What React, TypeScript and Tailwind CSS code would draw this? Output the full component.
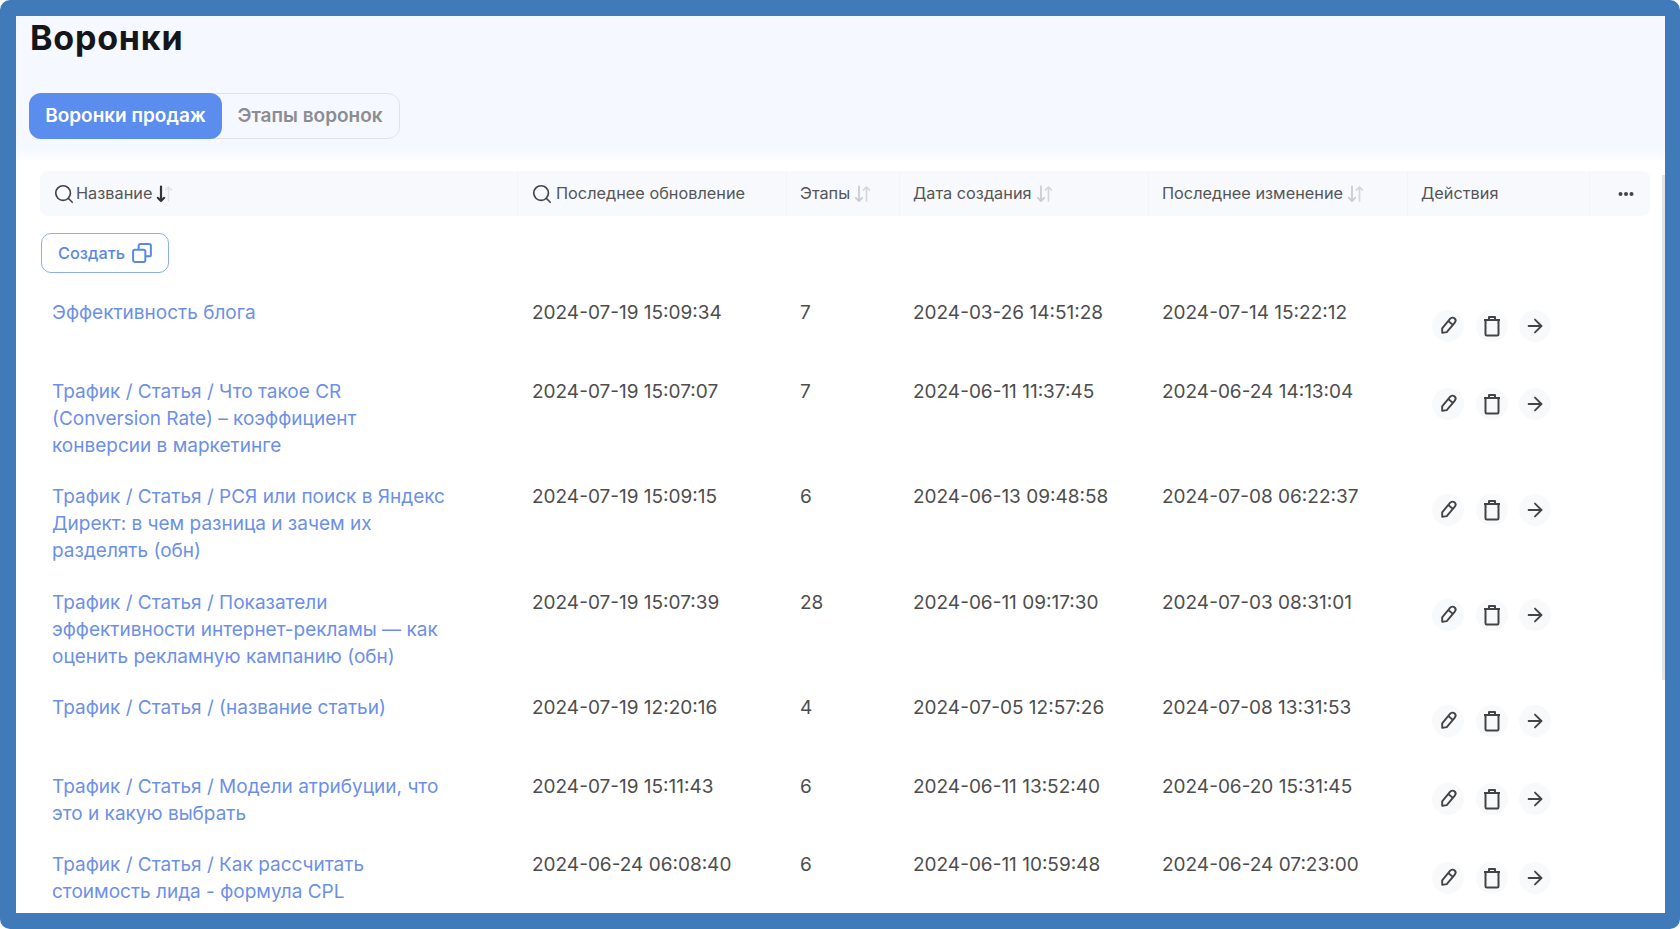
import React from "react";
import { Search, ArrowRight } from "lucide-react";

type Row = { name: string[]; updated: string; stages: string; created: string; changed: string };

const rows: Row[] = [
  { name: ["Эффективность блога"], updated: "2024-07-19 15:09:34", stages: "7", created: "2024-03-26 14:51:28", changed: "2024-07-14 15:22:12" },
  { name: ["Трафик / Статья / Что такое CR", "(Conversion Rate) – коэффициент", "конверсии в маркетинге"], updated: "2024-07-19 15:07:07", stages: "7", created: "2024-06-11 11:37:45", changed: "2024-06-24 14:13:04" },
  { name: ["Трафик / Статья / РСЯ или поиск в Яндекс", "Директ: в чем разница и зачем их", "разделять (обн)"], updated: "2024-07-19 15:09:15", stages: "6", created: "2024-06-13 09:48:58", changed: "2024-07-08 06:22:37" },
  { name: ["Трафик / Статья / Показатели", "эффективности интернет-рекламы — как", "оценить рекламную кампанию (обн)"], updated: "2024-07-19 15:07:39", stages: "28", created: "2024-06-11 09:17:30", changed: "2024-07-03 08:31:01" },
  { name: ["Трафик / Статья / (название статьи)"], updated: "2024-07-19 12:20:16", stages: "4", created: "2024-07-05 12:57:26", changed: "2024-07-08 13:31:53" },
  { name: ["Трафик / Статья / Модели атрибуции, что", "это и какую выбрать"], updated: "2024-07-19 15:11:43", stages: "6", created: "2024-06-11 13:52:40", changed: "2024-06-20 15:31:45" },
  { name: ["Трафик / Статья / Как рассчитать", "стоимость лида - формула CPL"], updated: "2024-06-24 06:08:40", stages: "6", created: "2024-06-11 10:59:48", changed: "2024-06-24 07:23:00" },
];

function SortIcon({ active = false }: { active?: boolean }) {
  const down = active ? "#333333" : "#c9ccd1";
  const up = active ? "#dfe2e6" : "#d3d6da";
  return (
    <svg width="17" height="20" viewBox="0 0 17 20" fill="none" strokeLinecap="round" strokeLinejoin="round">
      <path d="M5 2.500V17M1.800 13.800 5 17l3.200-3.200" stroke={down} strokeWidth={active ? 2.2 : 1.8} />
      <path d="M12.500 17V3M9.500 6 12.500 3l3 3" stroke={up} strokeWidth="1.7" />
    </svg>
  );
}

function PencilIcon() {
  return (
    <svg width="22" height="22" viewBox="0 0 22 22" fill="none" stroke="#444444" strokeWidth="1.900" strokeLinejoin="round">
      <g transform="rotate(40 11 11)">
        <path d="M8 4a3 3 0 0 1 6 0V16.500l-3 3.500-3-3.500z" />
        <path d="M8 7h6" />
      </g>
    </svg>
  );
}

function TrashIcon() {
  return (
    <svg width="22" height="22" viewBox="0 0 22 22" fill="none" stroke="#444444" strokeWidth="2" strokeLinejoin="round">
      <path d="M3 5h16" />
      <path d="M8 5V2h6v3" />
      <rect x="4.500" y="5" width="13" height="15.500" rx="1.200" />
    </svg>
  );
}

function CopyIcon() {
  return (
    <svg width="20" height="20" viewBox="0 0 18 18" fill="none" stroke="#5b88e8" strokeWidth="1.800" strokeLinejoin="round">
      <rect x="1" y="6" width="11" height="11" rx="1.500" />
      <path d="M6 6V2.500A1.500 1.500 0 0 1 7.500 1h8A1.500 1.500 0 0 1 17 2.500v8a1.500 1.500 0 0 1-1.500 1.500H12" />
    </svg>
  );
}

function ActionButton({ children }: { children: React.ReactNode }) {
  return <button className="flex h-8 w-8 items-center justify-center rounded-full bg-[#f8f9fb]">{children}</button>;
}

const thBase = "h-[45px] border-r border-[#f1f4f9] bg-[#f7f9fd] pl-[13px] pr-2 text-left align-middle text-[16.300px] font-normal text-[#555555]";
const tdBase = "pt-[13px] pb-[11.600px] pr-[13px] align-top text-[19px] leading-[27px] text-[#4d4d4d]";

export default function App() {
  return (
    <div className="h-screen w-screen overflow-hidden bg-white font-['Inter',sans-serif]">
      <div className="h-full rounded-[10px] bg-[#407ab8] pt-[16px] pb-[16px] pl-[16px] pr-[15px]">
        <div className="relative flex h-full flex-col overflow-hidden bg-[#f5f8fe]">
          <h1 className="ml-[14px] mt-[2px] text-[34px] font-bold leading-[40px] tracking-[0.8px] text-[#14161a]">Воронки</h1>

          <div className="ml-[13px] mt-[35px] flex h-[46px] w-[371px] rounded-[12px] border border-[#dfe2e7]">
            <div className="-m-px flex h-[46px] w-[193px] items-center justify-center rounded-[12px] bg-[#5b8def] text-[19px] font-semibold text-white">Воронки продаж</div>
            <div className="flex flex-1 items-center justify-center text-[19px] font-semibold text-[#8b8d90]">Этапы воронок</div>
          </div>

          <div className="mt-[21px] flex-1 bg-white pl-[24px] pr-[15px] pt-[11px] shadow-[0_-6px_8px_rgba(255,255,255,0.8)]">
            <table className="w-full table-fixed border-separate border-spacing-0">
              <colgroup>
                <col className="w-[478px]" />
                <col className="w-[269px]" />
                <col className="w-[113px]" />
                <col className="w-[249px]" />
                <col className="w-[259px]" />
                <col className="w-[182px]" />
                <col />
              </colgroup>
              <thead>
                <tr>
                  <th className={thBase + " rounded-l-[8px] pl-[11px]"}>
                    <span className="flex items-center gap-[1px]">
                      <Search size={22} strokeWidth={1.800} color="#444444" />
                      Название
                      <span className="ml-[3px] flex"><SortIcon active /></span>
                    </span>
                  </th>
                  <th className={thBase}>
                    <span className="flex items-center gap-[3px]">
                      <Search size={22} strokeWidth={1.800} color="#444444" />
                      Последнее обновление
                    </span>
                  </th>
                  <th className={thBase}>
                    <span className="flex items-center gap-[4px]">Этапы <SortIcon /></span>
                  </th>
                  <th className={thBase + " pl-[11px]"}>
                    <span className="flex items-center gap-[4px]">Дата создания <SortIcon /></span>
                  </th>
                  <th className={thBase}>
                    <span className="flex items-center gap-[4px]">Последнее изменение <SortIcon /></span>
                  </th>
                  <th className={thBase}>Действия</th>
                  <th className="rounded-r-[8px] bg-[#f7f9fd] text-center align-middle">
                    <svg className="ml-[28px]" width="16" height="6" viewBox="0 0 16 6" fill="#444444">
                      <circle cx="2.500" cy="3" r="2" />
                      <circle cx="8" cy="3" r="2" />
                      <circle cx="13.500" cy="3" r="2" />
                    </svg>
                  </th>
                </tr>
              </thead>
              <tbody>
                <tr>
                  <td colSpan={7} className="pt-[17px] pb-[13px]">
                    <button className="ml-px flex h-[40px] w-[128px] items-center justify-center gap-[7px] rounded-[10px] border border-[#8dabee] bg-white text-[16.300px] font-medium text-[#5b88e8]">
                      Создать
                      <CopyIcon />
                    </button>
                  </td>
                </tr>
                {rows.map((r) => (
                  <tr key={r.changed}>
                    <td className={tdBase + " pl-[12px] pr-0 text-[#6c8fe9]"}>
                      {r.name.map((line) => (
                        <div key={line} className="whitespace-nowrap">{line}</div>
                      ))}
                    </td>
                    <td className={tdBase + " pl-[14px]"}>{r.updated}</td>
                    <td className={tdBase + " pl-[13px]"}>{r.stages}</td>
                    <td className={tdBase + " pl-[13px]"}>{r.created}</td>
                    <td className={tdBase + " pl-[13px]"}>{r.changed}</td>
                    <td className="pt-[23.500px] pb-[23px] pl-[24px] align-top">
                      <div className="flex gap-[11.500px]">
                        <ActionButton><PencilIcon /></ActionButton>
                        <ActionButton><TrashIcon /></ActionButton>
                        <ActionButton><ArrowRight size={22} strokeWidth={2} color="#444444" /></ActionButton>
                      </div>
                    </td>
                    <td />
                  </tr>
                ))}
              </tbody>
            </table>
          </div>

          <div className="absolute right-0 top-[159px] h-[505px] w-[3px] bg-[#dfe3ea]" />
        </div>
      </div>
    </div>
  );
}
